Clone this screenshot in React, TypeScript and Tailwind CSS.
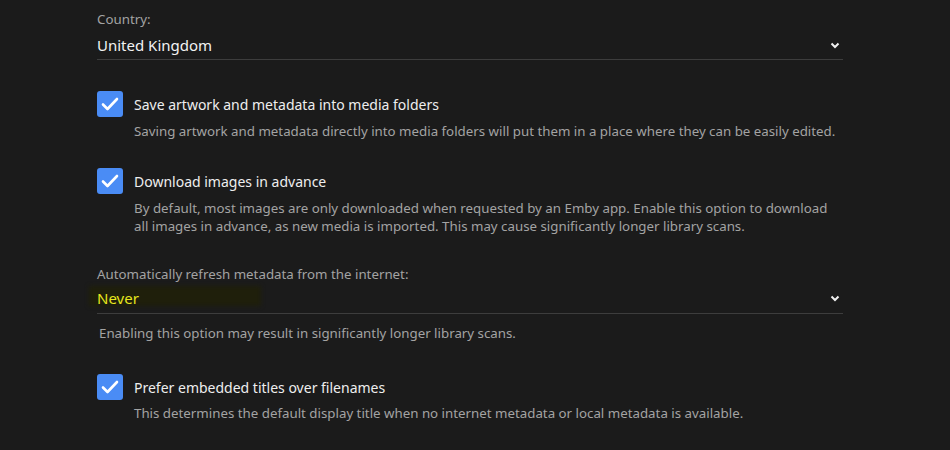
import React from "react";

const font = { fontFamily: '"Noto Sans", "Open Sans", sans-serif' };

function Chevron() {
  return (
    <svg width="10" height="7" viewBox="0 0 10 7" className="mr-[3px]">
      <path d="M1.5 1.5 L5 5 L8.5 1.5" stroke="#f0f0f0" strokeWidth="2" fill="none" />
    </svg>
  );
}

function Check() {
  return (
    <div className="w-[26px] h-[26px] rounded-[3px] bg-[#4a8cf5] flex items-center justify-center shrink-0">
      <svg width="18" height="14" viewBox="0 0 18 14">
        <path d="M2 7.5 L6.5 12 L16 2" stroke="#ffffff" strokeWidth="2.6" fill="none" strokeLinecap="round" strokeLinejoin="round" />
      </svg>
    </div>
  );
}

function CheckRow({ label, desc, gap }: { label: string; desc: React.ReactNode; gap: string }) {
  return (
    <div className="flex flex-col">
      <div className="flex items-center gap-[11px]">
        <Check />
        <span className="text-[14px] text-[#eeeeee]">{label}</span>
      </div>
      <div className={`ml-[37px] ${gap} text-[13.3px] leading-[18px] text-[#a3a3a3]`}>{desc}</div>
    </div>
  );
}

export default function App() {
  return (
    <div className="w-[950px] h-[450px] bg-[#1b1b1b] overflow-hidden" style={font}>
      <div className="ml-[97px] w-[746px] flex flex-col">
        <div className="pt-[9px] text-[13.3px] leading-[20px] text-[#a3a3a3]">Country:</div>
        <div className="flex items-center justify-between h-[31px] pt-[2px] border-b border-[#3d3d3d]">
          <span className="text-[15px] text-[#f2f2f2]">United Kingdom</span>
          <Chevron />
        </div>

        <div className="mt-[31px]">
          <CheckRow
            gap="mt-[5px]"
            label="Save artwork and metadata into media folders"
            desc="Saving artwork and metadata directly into media folders will put them in a place where they can be easily edited."
          />
        </div>

        <div className="mt-[28px]">
          <CheckRow
            gap="mt-[5px]"
            label="Download images in advance"
            desc={
              <>
                By default, most images are only downloaded when requested by an Emby app. Enable this option to download
                <br />
                all images in advance, as new media is imported. This may cause significantly longer library scans.
              </>
            }
          />
        </div>

        <div className="mt-[29px] text-[13.3px] leading-[20px] text-[#a3a3a3]">Automatically refresh metadata from the internet:</div>
        <div className="relative flex items-center justify-between h-[30px] border-b border-[#3d3d3d]">
          <div className="absolute left-[-8px] top-[2px] w-[172px] h-[20px] bg-[#1f1f0b] blur-[2px]" />
          <span className="relative text-[15px] text-[#e6e61e]">Never</span>
          <Chevron />
        </div>
        <div className="ml-[2px] mt-[9px] text-[13.3px] leading-[20px] text-[#a3a3a3]">
          Enabling this option may result in significantly longer library scans.
        </div>

        <div className="mt-[31px]">
          <CheckRow
            gap="mt-[4px]"
            label="Prefer embedded titles over filenames"
            desc="This determines the default display title when no internet metadata or local metadata is available."
          />
        </div>
      </div>
    </div>
  );
}
